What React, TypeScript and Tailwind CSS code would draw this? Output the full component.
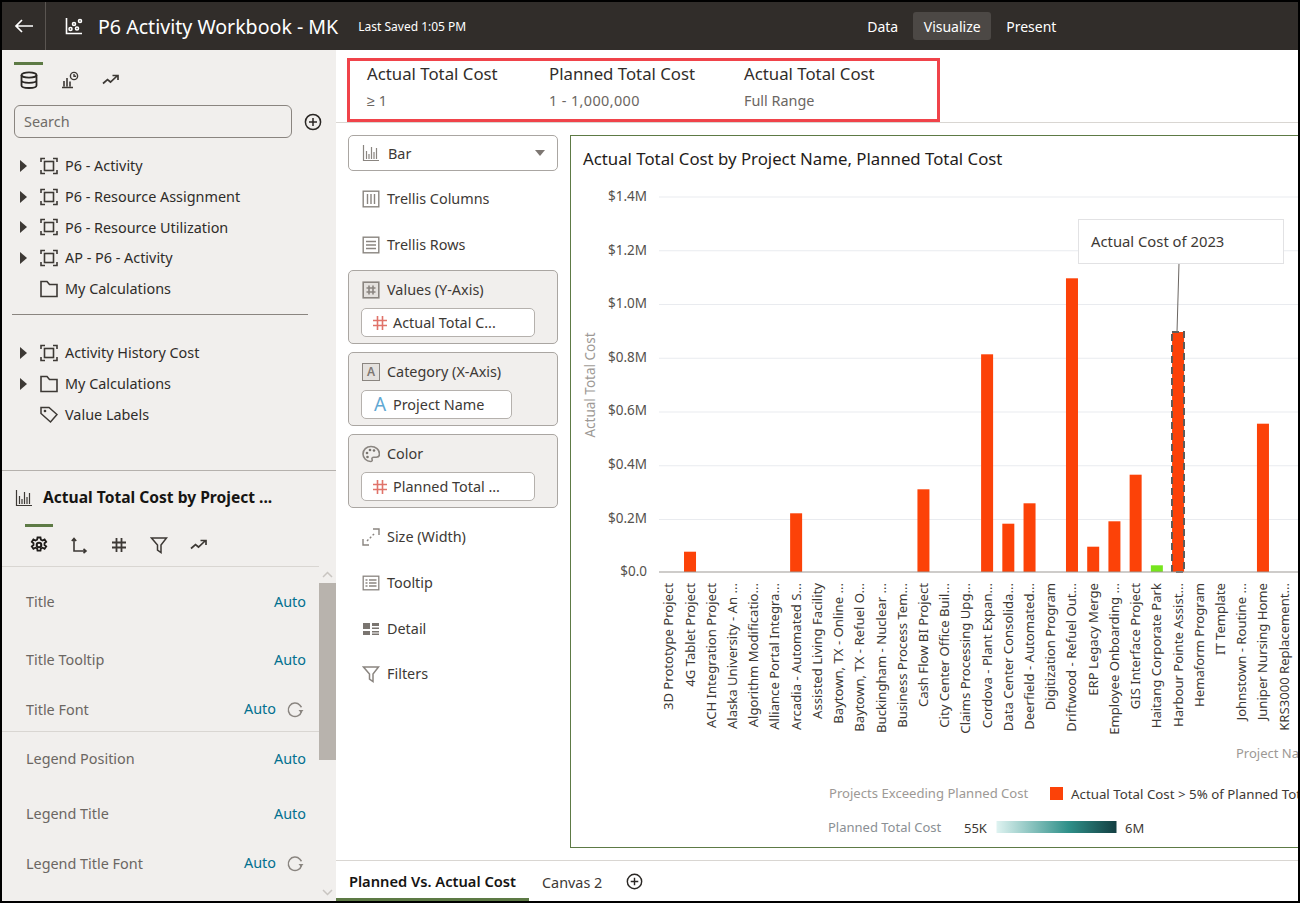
import React from "react";

const S = ({ size = 18, color = "currentColor", sw = 1.5, children }: { size?: number; color?: string; sw?: number; children: React.ReactNode }) => (
  <svg width={size} height={size} viewBox="0 0 18 18" fill="none" stroke={color} strokeWidth={sw} className="shrink-0">
    {children}
  </svg>
);

const BarIcon = ({ color = "#8a8580", sw = 1.2 }: { color?: string; sw?: number }) => (
  <S color={color} sw={sw}>
    <path d="M1.5 1v15.5h15.5M4.5 15V7M7 15v-5M9.5 15V3M12 15V8M14.5 15V4" />
  </S>
);
const Frame = () => (
  <S color="#3d3935" sw={1.6}>
    <path d="M1 5V1.500h4M13 1.500h4V5M1 13v3.500h4M13 16.500h4V13" />
    <rect x="4.500" y="4.500" width="9" height="9" />
  </S>
);
const Folder = () => (
  <S color="#3d3935" sw={1.6}>
    <path d="M1 16.500V1.500h6l2.500 3H17v12z" />
  </S>
);
const Tag = () => (
  <S color="#3d3935" sw={1.5}>
    <path d="M1 4.500V1.500h8l8 7-6.500 7.500L1 7.500z" />
    <circle cx="5" cy="5" r="0.600" />
  </S>
);
const Trend = () => (
  <S color="#3d3935" sw={1.7}>
    <path d="M1 12.500l4.500-4 3 2.500 6.500-6M10.500 4.500H16V9" />
  </S>
);
const DataIcon = () => (
  <S color="#2a2724" sw={1.8}>
    <ellipse cx="9" cy="4" rx="7.500" ry="2.600" />
    <path d="M1.500 4v10.500c0 1.500 3.500 2.500 7.500 2.500s7.500-1 7.500-2.500V4M1.500 9.300c0 1.500 3.500 2.500 7.500 2.500s7.500-1 7.500-2.500" />
  </S>
);
const AnalyticIcon = () => (
  <S color="#3d3935" sw={1.4}>
    <path d="M1 16.500h11M3 15.500V10M6 15.500V7M9 15.500v-5" strokeWidth="1.600" />
    <circle cx="13" cy="5" r="3.600" />
    <path d="M13 3v2.200h2" />
  </S>
);
const PlusCircle = ({ size = 18 }: { size?: number }) => (
  <S size={size} color="#2a2724" sw={1.5}>
    <circle cx="9" cy="9" r="7.600" />
    <path d="M9 5v8M5 9h8" />
  </S>
);
const Refresh = () => (
  <S color="#8a8580" sw={1.5}>
    <path d="M15.500 10.500a6.700 6.700 0 1 1-1.600-6.300l1.600 2" />
    <path d="M12.500 9h5l-2.500 3z" fill="#8a8580" stroke="none" />
  </S>
);
const Hash = ({ color, sw = 1.6 }: { color: string; sw?: number }) => (
  <S color={color} sw={sw}>
    <path d="M6.500 2v14M11.500 2v14M2 6.500h14M2 11.500h14" />
  </S>
);
const Funnel = ({ color }: { color: string }) => (
  <S color={color} sw={1.5}>
    <path d="M1.500 2h15L11 9v7.500L7.500 14V9z" />
  </S>
);
const Gear = () => (
  <S color="#1f1c1a" sw={2}>
    <circle cx="9" cy="9" r="2.300" />
    <path d="M7.500 1.500h3l.4 2.200 1.700.8 2-1.100 1.600 2.400-1.700 1.400v1.800l1.700 1.400-1.600 2.400-2-1.100-1.700.8-.4 2.200h-3l-.4-2.200-1.700-.8-2 1.100-1.600-2.400 1.700-1.400V7.200L1.800 5.800l1.600-2.400 2 1.100 1.700-.8z" strokeWidth="1.800" />
  </S>
);
const AxisIcon = () => (
  <S color="#3d3935" sw={1.6}>
    <path d="M4 3v12h12M1.800 5L4 2.500 6.200 5M13.500 12.800L16 15l-2.500 2.200" />
  </S>
);
const TrellisCols = () => (
  <S color="#8a8580" sw={1.4}>
    <rect x="1.200" y="1.200" width="15.600" height="15.600" />
    <path d="M5.500 4v10M9 4v10M12.500 4v10" />
  </S>
);
const TrellisRows = () => (
  <S color="#8a8580" sw={1.4}>
    <rect x="1.200" y="1.200" width="15.600" height="15.600" />
    <path d="M4 5.500h10M4 9h10M4 12.500h10" />
  </S>
);
const ValuesIcon = () => (
  <S color="#8a8580" sw={1.6}>
    <rect x="1.200" y="1.200" width="15.600" height="15.600" fill="#e4e1de" />
    <path d="M7 4.500v9M11 4.500v9M4.500 7h9M4.500 11h9" />
  </S>
);
const Palette = () => (
  <S color="#8a8580" sw={1.6}>
    <path d="M9 1.500C4.500 1.500 1 4.800 1 9c0 4 3.600 7.500 7.500 7.500 1.500 0 2-1 1.600-2-.5-1.200.2-2.300 1.600-2.300h2.600c2 0 3.200-1.300 3.200-3.200 0-4.200-3.800-7.500-8.500-7.500z" />
    <circle cx="5" cy="8" r="1.300" fill="#7a7570" stroke="none" />
    <circle cx="8" cy="5" r="1.300" fill="#7a7570" stroke="none" />
    <circle cx="12" cy="5.500" r="1.300" fill="#7a7570" stroke="none" />
    <circle cx="5.500" cy="12" r="1.300" fill="#7a7570" stroke="none" />
  </S>
);
const SizeIcon = () => (
  <S color="#8a8580" sw={1.4}>
    <path d="M1 11v6h6M11 1h6v6" />
    <path d="M5 13l8-8" strokeDasharray="2 2" />
  </S>
);
const TooltipIcon = () => (
  <S color="#8a8580" sw={1.3}>
    <rect x="1.200" y="2.200" width="15.600" height="13.600" />
    <path d="M3.500 6h2M7 6h7.500M3.500 9h2M7 9h7.500M3.500 12h2M7 12h7.500" />
  </S>
);
const DetailIcon = () => (
  <svg width="18" height="18" viewBox="0 0 18 18" fill="#7a7570" className="shrink-0">
    <rect x="1" y="3" width="7" height="6" />
    <rect x="1" y="11" width="7" height="4" />
    <path d="M10 3h7v3h-7zM10 7.500h7V9h-7zM10 11h7v1.500h-7zM10 13.500h7V15h-7z" />
  </svg>
);

const Caret = () => <span className="w-0 h-0 border-y-[6px] border-y-transparent border-l-[7px] border-l-[#3d3935] shrink-0" />;

const TreeRow = ({ icon, label, caret = true }: { icon: React.ReactNode; label: string; caret?: boolean }) => (
  <div className="flex items-center h-[30.75px] pl-[18px] text-[#2f2c29]">
    <span className="w-[20px] flex">{caret && <Caret />}</span>
    {icon}
    <span className="ml-[7px] text-[14.4px]">{label}</span>
  </div>
);

const PropRow = ({ label, h, refresh }: { label: string; h: string; refresh?: boolean }) => (
  <div className={`flex items-center justify-between pl-[24px] pr-[13px] ${h}`}>
    <span className="text-[14.4px] text-[#6b6662]">{label}</span>
    <span className="flex items-center">
      <span className={refresh ? "text-[14.4px] text-[#02708f] pb-[3px]" : "text-[14.4px] text-[#02708f]"}>Auto</span>
      {refresh && (
        <span className="ml-[10px] mr-[2px] flex">
          <Refresh />
        </span>
      )}
    </span>
  </div>
);

const GrammarPlain = ({ icon, label, cls }: { icon: React.ReactNode; label: string; cls: string }) => (
  <div className={`flex items-center pl-[14px] ${cls}`}>
    {icon}
    <span className="ml-[7px] text-[14.4px] text-[#3d3935]">{label}</span>
  </div>
);

const GrammarBox = ({ icon, label, pillIcon, pill, pillW, cls }: { icon: React.ReactNode; label: string; pillIcon: React.ReactNode; pill: string; pillW: string; cls: string }) => (
  <div className={`h-[74px] rounded-[5px] border border-[#aaa6a2] bg-[#f1efed] pl-[12px] pt-[9px] ${cls}`}>
    <div className="flex items-center h-[20px] pl-[1px]">
      {icon}
      <span className="ml-[7px] text-[14.4px] text-[#3d3935]">{label}</span>
    </div>
    <div className={`mt-[8px] h-[29px] bg-white rounded-[5px] border border-[#b5b1ad] flex items-center pl-[9px] ${pillW}`}>
      {pillIcon}
      <span className="ml-[4px] text-[14.4px] text-[#3d3935]">{pill}</span>
    </div>
  </div>
);

const labels = [
  "3D Prototype Project", "4G Tablet Project", "ACH Integration Project", "Alaska University - An ...", "Algorithm Modificatio...",
  "Alliance Portal Integra...", "Arcadia - Automated S...", "Assisted Living Facility", "Baytown, TX - Online ...", "Baytown, TX - Refuel O...",
  "Buckingham - Nuclear ...", "Business Process Tem...", "Cash Flow BI Project", "City Center Office Buil...", "Claims Processing Upg...",
  "Cordova - Plant Expan...", "Data Center Consolida...", "Deerfield - Automated...", "Digitization Program", "Driftwood - Refuel Out...",
  "ERP Legacy Merge", "Employee Onboarding ...", "GIS Interface Project", "Haitang Corporate Park", "Harbour Pointe Assist...",
  "Hemaform Program", "IT Template", "Johnstown - Routine ...", "Juniper Nursing Home", "KRS3000 Replacement...",
];
const bars: [number, number, string][] = [
  [1, 551.7, "#fc4208"], [6, 513.3, "#fc4208"], [12, 489.3, "#fc4208"], [15, 354.3, "#fc4208"], [16, 523.7, "#fc4208"],
  [17, 503.3, "#fc4208"], [19, 278.3, "#fc4208"], [20, 546.7, "#fc4208"], [21, 521.3, "#fc4208"], [22, 474.7, "#fc4208"],
  [23, 565.3, "#76e51d"], [24, 332, "#fc4208"], [28, 423.7, "#fc4208"],
];
const ticks = ["$1.4M", "$1.2M", "$1.0M", "$0.8M", "$0.6M", "$0.4M", "$0.2M"];

const ox = 571;
const oy = 136;

const Chart = () => (
  <svg width="727" height="711" viewBox={`${ox} ${oy} 727 711`} className="block">
    <defs>
      <linearGradient id="lg" x1="0" x2="1" y1="0" y2="0">
        <stop offset="0" stopColor="#dff3f1" />
        <stop offset="0.6" stopColor="#2f9089" />
        <stop offset="1" stopColor="#133f42" />
      </linearGradient>
    </defs>
    <text x="583" y="165" fontSize="16.8" fill="#1f1c1a">Actual Total Cost by Project Name, Planned Total Cost</text>
    {ticks.map((t, i) => (
      <g key={t}>
        <line x1="659" x2="1298" y1={197 + i * 53.75} y2={197 + i * 53.75} stroke="#e9ebef" strokeWidth="1.200" />
        <text x="647" y={201 + i * 53.6} fontSize="13.500" fill="#55514d" textAnchor="end">{t}</text>
      </g>
    ))}
    <text x="647" y="576" fontSize="13.500" fill="#55514d" textAnchor="end">$0.0</text>
    <text transform="translate(595 385) rotate(-90)" fontSize="13.500" fill="#9d9995" textAnchor="middle">Actual Total Cost</text>
    {bars.map(([i, top, c]) => {
      const x = 668.8 + 21.22 * i - 6;
      return <rect key={i} x={x} y={top} width="12" height={572 - top} fill={c} />;
    })}
    <rect x="1172" y="332" width="12" height="240" fill="none" stroke="#5f5b58" strokeWidth="2" strokeDasharray="7 4" />
    <line x1="1179" y1="263" x2="1177" y2="332" stroke="#6b6662" strokeWidth="1" />
    <line x1="659" x2="1298" y1="572" y2="572" stroke="#9d9995" strokeWidth="1" />
    <rect x="1078.500" y="219.500" width="205" height="44" fill="#fff" stroke="#e2e2e4" />
    <text x="1091" y="247" fontSize="14.800" fill="#3d3935">Actual Cost of 2023</text>
    {labels.map((l, i) => (
      <text key={l} transform={`translate(${668.8 + 21.22 * i + 4.500} 583) rotate(-90)`} fontSize="13.100" fill="#3d3935" textAnchor="end">{l}</text>
    ))}
    <text x="1236" y="758" fontSize="13" fill="#9d9995">Project Name</text>
    <text x="829" y="798" fontSize="13.100" fill="#9d9995">Projects Exceeding Planned Cost</text>
    <rect x="1050" y="787" width="13" height="13" fill="#fc4208" />
    <text x="1071" y="799" fontSize="13.300" fill="#3d3935">Actual Total Cost &gt; 5% of Planned Total Cost</text>
    <text x="828" y="832" fontSize="13" fill="#8a8f94">Planned Total Cost</text>
    <text x="964" y="833" fontSize="13" fill="#3d3935">55K</text>
    <rect x="996.500" y="821" width="120" height="12" fill="url(#lg)" />
    <text x="1125" y="833" fontSize="13" fill="#3d3935">6M</text>
  </svg>
);

export default function App() {
  return (
    <div className="w-[1300px] h-[903px] border-2 border-black flex flex-col overflow-hidden bg-white font-['Noto_Sans',sans-serif]">
      <header className="h-[48px] shrink-0 bg-[#312d2a] flex items-center text-white">
        <div className="w-[44px] h-full flex items-center justify-center border-r border-[#5a5551]">
          <svg width="20" height="16" viewBox="0 0 20 16" fill="none" stroke="#fff" strokeWidth="1.700"><path d="M19 8H2M8 2L2 8l6 6" /></svg>
        </div>
        <div className="ml-[19px]">
          <S color="#fff" sw={1.600}>
            <path d="M1.500 1v15.500H17" />
            <circle cx="5.500" cy="12" r="1.500" /><circle cx="9" cy="7" r="1.500" /><circle cx="12" cy="11.500" r="1.500" /><circle cx="15" cy="4" r="1.500" />
          </S>
        </div>
        <span className="ml-[15px] text-[19.6px] whitespace-nowrap pt-[2px]">P6 Activity Workbook - MK</span>
        <span className="ml-[20px] text-[12px] whitespace-nowrap pt-[1px]">Last Saved 1:05 PM</span>
        <nav className="ml-[401px] flex items-center text-[14px]">
          <span>Data</span>
          <span className="ml-[15px] h-[28px] w-[78px] flex items-center justify-center rounded-[3px] bg-[#4c4845]">Visualize</span>
          <span className="ml-[15px]">Present</span>
        </nav>
      </header>

      <div className="flex-1 flex min-h-0">
        <aside className="w-[334px] shrink-0 bg-[#f1efed] flex flex-col">
          <div className="h-[421px] shrink-0 border-b border-[#b5b1ad]">
            <div className="flex pl-[12px] pt-[12px] gap-[12px]">
              <div className="w-[29px] h-[27px] border-t-[3px] border-[#5d7a45] flex justify-center pt-[6px]"><DataIcon /></div>
              <div className="w-[29px] h-[27px] border-t-[3px] border-transparent flex justify-center pt-[6px]"><AnalyticIcon /></div>
              <div className="w-[29px] h-[27px] border-t-[3px] border-transparent flex justify-center pt-[6px]"><Trend /></div>
            </div>
            <div className="flex items-center pl-[12px] mt-[16px]">
              <div className="w-[278px] h-[33px] rounded-[6px] border border-[#8a8580] flex items-center pl-[9px] text-[14.4px] text-[#706c68]">Search</div>
              <span className="ml-[12px] flex"><PlusCircle /></span>
            </div>
            <div className="mt-[12.5px] pb-[0.5px]">
              <TreeRow icon={<Frame />} label="P6 - Activity" />
              <TreeRow icon={<Frame />} label="P6 - Resource Assignment" />
              <TreeRow icon={<Frame />} label="P6 - Resource Utilization" />
              <TreeRow icon={<Frame />} label="AP - P6 - Activity" />
              <TreeRow icon={<Folder />} label="My Calculations" caret={false} />
            </div>
            <div className="ml-[10px] w-[296px] border-t border-[#8a8580] mt-[9px]" />
            <div className="mt-[23px]">
              <TreeRow icon={<Frame />} label="Activity History Cost" />
              <TreeRow icon={<Folder />} label="My Calculations" />
              <TreeRow icon={<Tag />} label="Value Labels" caret={false} />
            </div>
          </div>

          <div className="h-[53px] shrink-0 flex items-center pl-[13px]">
            <BarIcon color="#3d3935" />
            <span className="ml-[10px] pt-[1px] text-[15.6px] font-bold text-[#161513] whitespace-nowrap">Actual Total Cost by Project ...</span>
          </div>
          <div className="h-[43px] shrink-0 flex pl-[23px] gap-[12px] border-b border-[#d9d6d2] w-[317px]">
            <div className="w-[28px] h-[42px] border-t-[3px] border-[#5d7a45] flex justify-center pt-[9px]"><Gear /></div>
            <div className="w-[28px] h-[42px] border-t-[3px] border-transparent flex justify-center pt-[9px]"><AxisIcon /></div>
            <div className="w-[28px] h-[42px] border-t-[3px] border-transparent flex justify-center pt-[9px]"><Hash color="#3d3935" sw={1.800} /></div>
            <div className="w-[28px] h-[42px] border-t-[3px] border-transparent flex justify-center pt-[9px]"><Funnel color="#3d3935" /></div>
            <div className="w-[28px] h-[42px] border-t-[3px] border-transparent flex justify-center pt-[9px]"><Trend /></div>
          </div>
          <div className="flex-1 flex min-h-0">
            <div className="w-[317px] shrink-0">
              <div className="pt-[13px] pb-[7px] border-b border-[#d9d6d2]">
                <PropRow label="Title" h="h-[44px]" />
                <PropRow label="Title Tooltip" h="h-[72px]" />
                <PropRow label="Title Font" h="h-[28px]" refresh />
              </div>
              <div className="pt-[5px]">
                <PropRow label="Legend Position" h="h-[44px]" />
                <PropRow label="Legend Title" h="h-[66px]" />
                <PropRow label="Legend Title Font" h="h-[34px]" refresh />
              </div>
            </div>
            <div className="w-[17px] flex flex-col items-center">
              <svg width="17" height="16" viewBox="0 0 17 16" fill="none" stroke="#c9c5c1" strokeWidth="1.500"><path d="M4 10l4.500-4.500L13 10" /></svg>
              <div className="w-full h-[177px] bg-[#b8b3ad]" />
              <div className="flex-1" />
              <svg width="17" height="16" viewBox="0 0 17 16" fill="none" stroke="#c9c5c1" strokeWidth="1.500"><path d="M4 5l4.500 4.500L13 5" /></svg>
            </div>
          </div>
        </aside>

        <main className="flex-1 min-w-0 flex flex-col">
          <div className="h-[73px] shrink-0 border-b border-[#d9d6d2] pt-[8px] pl-[11px]">
            <div className="w-[593px] h-[64px] border-[3px] border-[#f0434a] flex pl-[17px] pt-[1px]">
              <div className="w-[182px]">
                <div className="text-[16.8px] leading-[24px] text-[#312d2a]">Actual Total Cost</div>
                <div className="mt-[4px] text-[14.4px] leading-[22px] text-[#6b6662]">≥ 1</div>
              </div>
              <div className="w-[195px]">
                <div className="text-[16.8px] leading-[24px] text-[#312d2a]">Planned Total Cost</div>
                <div className="mt-[4px] text-[14.4px] leading-[22px] tracking-[0.4px] text-[#6b6662]">1 - 1,000,000</div>
              </div>
              <div>
                <div className="text-[16.8px] leading-[24px] text-[#312d2a]">Actual Total Cost</div>
                <div className="mt-[4px] text-[14.4px] leading-[22px] text-[#6b6662]">Full Range</div>
              </div>
            </div>
          </div>

          <div className="flex-1 flex min-h-0 overflow-hidden">
            <div className="w-[234px] shrink-0 pl-[12px] pt-[12px]">
              <div className="w-[210px] h-[36px] rounded-[5px] border border-[#aaa6a2] flex items-center pl-[13px] pr-[12px]">
                <BarIcon />
                <span className="ml-[8px] pt-[2px] text-[14.4px] text-[#3d3935]">Bar</span>
                <span className="ml-auto w-0 h-0 border-x-[5px] border-x-transparent border-t-[6px] border-t-[#7d7772]" />
              </div>
              <div className="w-[210px]">
                <GrammarPlain icon={<TrellisCols />} label="Trellis Columns" cls="h-[20px] mt-[18px]" />
                <GrammarPlain icon={<TrellisRows />} label="Trellis Rows" cls="h-[20px] mt-[26px]" />
                <GrammarBox cls="mt-[15px]" icon={<ValuesIcon />} label="Values (Y-Axis)" pillIcon={<Hash color="#e0736a" />} pill="Actual Total C..." pillW="w-[174px]" />
                <GrammarBox cls="mt-[8px]" icon={<span className="w-[18px] h-[18px] border-[1.500px] border-[#8a8580] bg-[#e4e1de] flex items-center justify-center text-[12px] font-semibold text-[#7d7772]">A</span>} label="Category (X-Axis)" pillIcon={<span className="w-[18px] text-center text-[19px] leading-none text-[#5fa8d3]">A</span>} pill="Project Name" pillW="w-[151px]" />
                <GrammarBox cls="mt-[8px]" icon={<Palette />} label="Color" pillIcon={<Hash color="#e0736a" />} pill="Planned Total ..." pillW="w-[174px]" />
                <GrammarPlain icon={<SizeIcon />} label="Size (Width)" cls="h-[20px] mt-[19px]" />
                <GrammarPlain icon={<TooltipIcon />} label="Tooltip" cls="h-[20px] mt-[26px]" />
                <GrammarPlain icon={<DetailIcon />} label="Detail" cls="h-[20px] mt-[26px]" />
                <GrammarPlain icon={<Funnel color="#8a8580" />} label="Filters" cls="h-[20px] mt-[25px]" />
              </div>
            </div>
            <div className="flex-1 min-w-0 flex flex-col pt-[12px]">
              <div className="h-[713px] shrink-0 border border-r-0 border-[#5d7a45] overflow-hidden">
                <Chart />
              </div>
            </div>
          </div>

          <div className="h-[41px] shrink-0 border-t border-[#d9d6d2] flex items-start">
            <div className="w-[193px] h-[40px] border-b-[3px] border-[#5d7a45] flex items-center justify-center pt-[3px] text-[14.7px] font-semibold text-[#161513]">Planned Vs. Actual Cost</div>
            <span className="ml-[13px] h-[40px] flex items-center pt-[3px] text-[14.4px] text-[#3d3935]">Canvas 2</span>
            <span className="ml-[24px] h-[40px] flex items-center"><PlusCircle size={17} /></span>
          </div>
        </main>
      </div>
    </div>
  );
}
